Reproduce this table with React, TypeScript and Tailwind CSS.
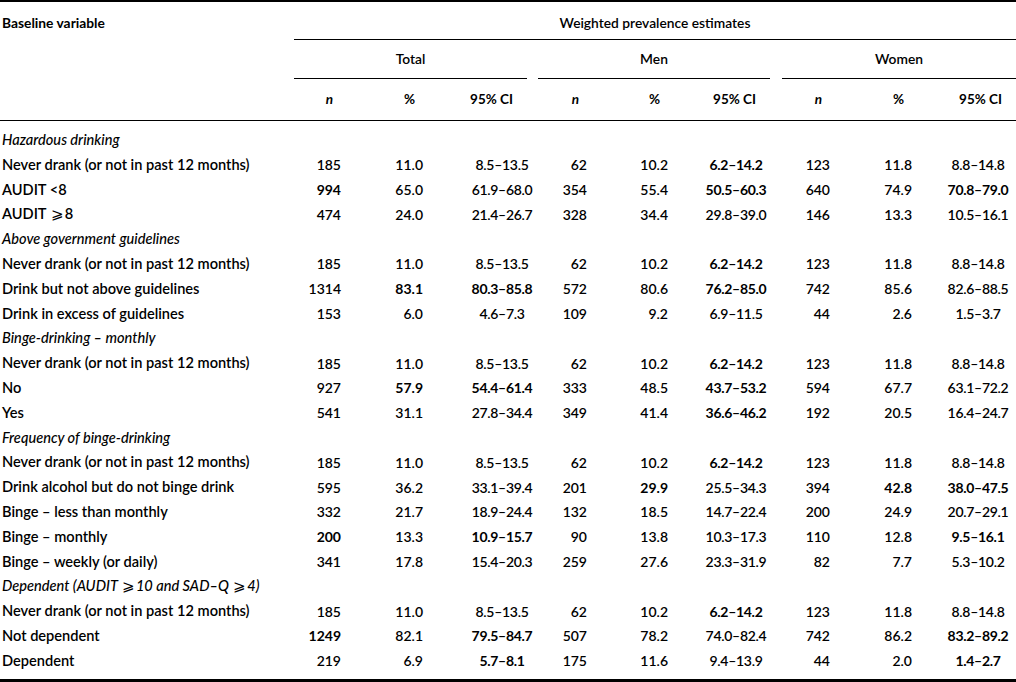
import { Fragment } from 'react';

const grid =
  'grid grid-cols-[294px_47px_82px_104px_11px_49px_81px_102px_12px_48px_82px_104px]';

type Row = { section: string } | { label: string; cells: string[] };

const never = ['185', '11.0', '8.5–13.5', '62', '10.2', '6.2–14.2*', '123', '11.8', '8.8–14.8'];
const neverLabel = 'Never drank (or not in past 12 months)';

const rows: Row[] = [
  { section: 'Hazardous drinking' },
  { label: neverLabel, cells: never },
  { label: 'AUDIT <8', cells: ['994*', '65.0', '61.9–68.0', '354', '55.4', '50.5–60.3*', '640', '74.9', '70.8–79.0*'] },
  { label: 'AUDIT ⩾8', cells: ['474', '24.0', '21.4–26.7', '328', '34.4', '29.8–39.0', '146', '13.3', '10.5–16.1'] },
  { section: 'Above government guidelines' },
  { label: neverLabel, cells: never },
  { label: 'Drink but not above guidelines', cells: ['1314', '83.1*', '80.3–85.8*', '572', '80.6', '76.2–85.0*', '742', '85.6', '82.6–88.5'] },
  { label: 'Drink in excess of guidelines', cells: ['153', '6.0', '4.6–7.3', '109', '9.2', '6.9–11.5', '44', '2.6', '1.5–3.7'] },
  { section: 'Binge-drinking – monthly' },
  { label: neverLabel, cells: never },
  { label: 'No', cells: ['927', '57.9*', '54.4–61.4*', '333', '48.5', '43.7–53.2*', '594', '67.7', '63.1–72.2'] },
  { label: 'Yes', cells: ['541', '31.1', '27.8–34.4', '349', '41.4', '36.6–46.2*', '192', '20.5', '16.4–24.7'] },
  { section: 'Frequency of binge-drinking' },
  { label: neverLabel, cells: never },
  { label: 'Drink alcohol but do not binge drink', cells: ['595', '36.2', '33.1–39.4', '201', '29.9*', '25.5–34.3', '394', '42.8*', '38.0–47.5*'] },
  { label: 'Binge – less than monthly', cells: ['332', '21.7', '18.9–24.4', '132', '18.5', '14.7–22.4', '200', '24.9', '20.7–29.1'] },
  { label: 'Binge – monthly', cells: ['200*', '13.3', '10.9–15.7*', '90', '13.8', '10.3–17.3', '110', '12.8', '9.5–16.1*'] },
  { label: 'Binge – weekly (or daily)', cells: ['341', '17.8', '15.4–20.3', '259', '27.6', '23.3–31.9', '82', '7.7', '5.3–10.2'] },
  { section: 'Dependent (AUDIT ⩾10 and SAD–Q ⩾4)' },
  { label: neverLabel, cells: never },
  { label: 'Not dependent', cells: ['1249*', '82.1', '79.5–84.7*', '507', '78.2', '74.0–82.4', '742', '86.2', '83.2–89.2*'] },
  { label: 'Dependent', cells: ['219', '6.9', '5.7–8.1*', '175', '11.6', '9.4–13.9', '44', '2.0', '1.4–2.7*'] },
];

// padding that puts the centre of each CI column where the reference has it
const ciPad = ['pl-[54px]', 'pl-[34px]', 'pl-[28px]'];

// the ⩾ sign comes from a fallback font, keep it light like the original
function Sym({ text }: { text: string }) {
  const parts = text.split('⩾');
  return (
    <>
      {parts.map((p, i) => (
        <Fragment key={i}>
          {i > 0 && <span className="font-normal not-italic mx-[1px]">⩾</span>}
          {p}
        </Fragment>
      ))}
    </>
  );
}

function Value({ v, kind, group }: { v: string; kind: number; group: number }) {
  const bold = v.endsWith('*');
  const text = bold ? v.slice(0, -1) : v;
  const weight = bold ? 'font-bold' : 'font-semibold';
  if (kind === 2) {
    return (
      <div className={`flex justify-center whitespace-nowrap tracking-[-0.3px] ${ciPad[group]} ${weight}`}>
        <span>{text}</span>
      </div>
    );
  }
  return <div className={`text-right whitespace-nowrap ${weight}`}>{text}</div>;
}

function DataRow({ label, cells }: { label: string; cells: string[] }) {
  return (
    <div className={`${grid} h-[24.8px] items-center`}>
      <div className="pl-[2px] text-[14.6px] font-semibold whitespace-nowrap">
        <Sym text={label} />
      </div>
      {[0, 1, 2].map((g) => (
        <Fragment key={g}>
          <Value v={cells[g * 3]} kind={0} group={g} />
          <Value v={cells[g * 3 + 1]} kind={1} group={g} />
          <Value v={cells[g * 3 + 2]} kind={2} group={g} />
          {g < 2 && <div />}
        </Fragment>
      ))}
    </div>
  );
}

function SubHead() {
  return (
    <>
      <div className="pr-[8px] text-right italic font-bold">n</div>
      <div className="pr-[8px] text-right font-bold">%</div>
      <div className="pr-[14px] text-right font-bold">95% CI</div>
    </>
  );
}

export default function App() {
  return (
    <div
      className="w-[1016px] h-[682px] bg-white text-black text-[14px] leading-none overflow-hidden"
      style={{ fontFamily: 'Lato, "Open Sans", sans-serif' }}
    >
      <div className="border-t-2 border-black">
        {/* header block */}
        <div className={`${grid} text-[13.8px]`}>
          <div className="pl-[2px] pt-[14px] font-bold">Baseline variable</div>
          <div className="col-span-11 h-[38px] border-b border-black flex justify-center pt-[14px] font-semibold">
            Weighted prevalence estimates
          </div>
        </div>
        <div className={`${grid} text-[13.8px] h-[39px]`}>
          <div />
          <div className="col-span-3 border-b border-black flex items-center justify-center font-semibold">Total</div>
          <div />
          <div className="col-span-3 border-b border-black flex items-center justify-center font-semibold">Men</div>
          <div />
          <div className="col-span-3 border-b border-black flex items-center justify-center font-semibold">Women</div>
        </div>
        <div className={`${grid} text-[13.5px] h-[42px] items-center border-b border-black`}>
          <div />
          <SubHead />
          <div />
          <SubHead />
          <div />
          <SubHead />
        </div>

        {/* body */}
        <div className="pt-[7px] pb-[5px] border-b-[3px] border-black">
          {rows.map((r, i) =>
            'section' in r ? (
              <div key={i} className="h-[24.8px] flex items-center pl-[2px] text-[14.6px] italic font-medium whitespace-pre">
                <Sym text={r.section} />
              </div>
            ) : (
              <DataRow key={i} label={r.label} cells={r.cells} />
            )
          )}
        </div>
      </div>
    </div>
  );
}
